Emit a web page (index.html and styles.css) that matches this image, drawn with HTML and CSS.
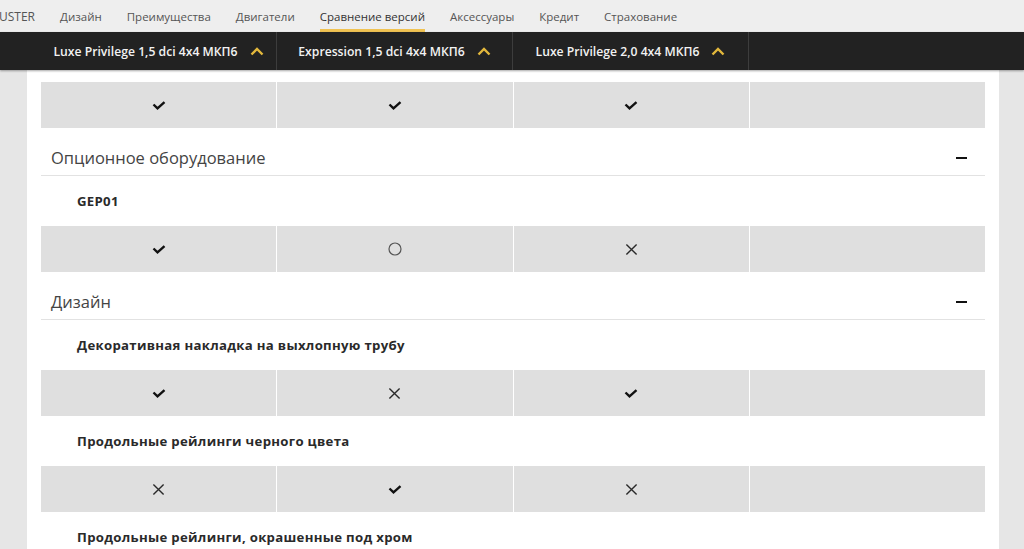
FILE: index.html
```html
<!DOCTYPE html>
<html lang="ru">
<head>
  <meta charset="UTF-8">
  <title>Сравнение версий</title>
  <link rel="stylesheet" href="styles.css">
</head>
<body>
  <!-- Верхнее меню -->
  <nav class="topnav">
    <a href="#" class="first">USTER</a>
    <a href="#">Дизайн</a>
    <a href="#">Преимущества</a>
    <a href="#">Двигатели</a>
    <a href="#" class="active">Сравнение версий</a>
    <a href="#">Аксессуары</a>
    <a href="#">Кредит</a>
    <a href="#">Страхование</a>
  </nav>

  <!-- Версии -->
  <div class="versions">
    <div class="version">Luxe Privilege 1,5 dci 4x4 МКП6 <svg class="chev" viewBox="0 0 14 9"><polyline points="1.5,7.5 7,2 12.5,7.5"/></svg></div>
    <div class="version">Expression 1,5 dci 4x4 МКП6 <svg class="chev" viewBox="0 0 14 9"><polyline points="1.5,7.5 7,2 12.5,7.5"/></svg></div>
    <div class="version">Luxe Privilege 2,0 4x4 МКП6 <svg class="chev" viewBox="0 0 14 9"><polyline points="1.5,7.5 7,2 12.5,7.5"/></svg></div>
  </div>

  <main class="content">
    <div class="cells">
      <div class="cell"><svg class="ico yes" viewBox="0 0 14 9"><polyline points="1.5,3.5 5.5,7.3 12.5,1.2"/></svg></div>
      <div class="cell"><svg class="ico yes" viewBox="0 0 14 9"><polyline points="1.5,3.5 5.5,7.3 12.5,1.2"/></svg></div>
      <div class="cell"><svg class="ico yes" viewBox="0 0 14 9"><polyline points="1.5,3.5 5.5,7.3 12.5,1.2"/></svg></div>
      <div class="cell"></div>
    </div>

    <div class="section">Опционное оборудование <span class="minus"></span></div>
    <div class="label">GEP01</div>
    <div class="cells">
      <div class="cell"><svg class="ico yes" viewBox="0 0 14 9"><polyline points="1.5,3.5 5.5,7.3 12.5,1.2"/></svg></div>
      <div class="cell"><svg class="ico opt" viewBox="0 0 14 14"><circle cx="7" cy="7" r="6"/></svg></div>
      <div class="cell"><svg class="ico no" viewBox="0 0 14 14"><path d="M1.5 1.5 L12.5 12.5 M12.5 1.5 L1.5 12.5"/></svg></div>
      <div class="cell"></div>
    </div>

    <div class="section">Дизайн <span class="minus"></span></div>
    <div class="label">Декоративная накладка на выхлопную трубу</div>
    <div class="cells">
      <div class="cell"><svg class="ico yes" viewBox="0 0 14 9"><polyline points="1.5,3.5 5.5,7.3 12.5,1.2"/></svg></div>
      <div class="cell"><svg class="ico no" viewBox="0 0 14 14"><path d="M1.5 1.5 L12.5 12.5 M12.5 1.5 L1.5 12.5"/></svg></div>
      <div class="cell"><svg class="ico yes" viewBox="0 0 14 9"><polyline points="1.5,3.5 5.5,7.3 12.5,1.2"/></svg></div>
      <div class="cell"></div>
    </div>
    <div class="label">Продольные рейлинги черного цвета</div>
    <div class="cells">
      <div class="cell"><svg class="ico no" viewBox="0 0 14 14"><path d="M1.5 1.5 L12.5 12.5 M12.5 1.5 L1.5 12.5"/></svg></div>
      <div class="cell"><svg class="ico yes" viewBox="0 0 14 9"><polyline points="1.5,3.5 5.5,7.3 12.5,1.2"/></svg></div>
      <div class="cell"><svg class="ico no" viewBox="0 0 14 14"><path d="M1.5 1.5 L12.5 12.5 M12.5 1.5 L1.5 12.5"/></svg></div>
      <div class="cell"></div>
    </div>
    <div class="label">Продольные рейлинги, окрашенные под хром</div>
  </main>
</body>
</html>
```

FILE: styles.css
```css
/* ---------- общие ---------- */
* { margin: 0; padding: 0; box-sizing: border-box; }
html, body { height: 100%; overflow: hidden; }
body { background: #e6e6e6; font-family: "Open Sans", "DejaVu Sans", sans-serif; color: #333; }

/* ---------- верхнее меню ---------- */
.topnav {
  height: 32px; background: #eeeeee;
  display: flex; align-items: stretch; gap: 25px;
  margin-left: -1px;
}
.topnav a {
  display: flex; align-items: center;
  font-size: 11.5px; color: #555; text-decoration: none;
  border-bottom: 3px solid transparent; padding-top: 3px;
}
.topnav a.first { font-size: 12px; }
.topnav a.active { color: #333; border-bottom-color: #f0c252; }

/* ---------- версии ---------- */
.versions {
  height: 38px; background: #222;
  display: flex; padding-left: 41px;
  box-shadow: 0 1px 2px rgba(0,0,0,0.35);
  position: relative;
}
.version {
  width: 236px; border-right: 1px solid #3d3d3d;
  display: flex; align-items: center; justify-content: center; gap: 12px;
  color: #f2f2f2; font-size: 12.2px; font-weight: 600;
}
.chev { width: 14px; height: 9px; fill: none; stroke: #e3b83c; stroke-width: 2.4; }

/* ---------- таблица ---------- */
.content {
  background: #fff; margin: 0 25px 0 27px;
  padding: 12px 14px 0 14px; height: 100%; overflow: hidden;
}
.cells {
  display: grid; grid-template-columns: repeat(4, 1fr); gap: 1px;
  height: 46px;
}
.cell { background: #dfdfdf; display: flex; align-items: center; justify-content: center; }
.ico { fill: none; }
.ico.yes { width: 14px; height: 9px; stroke: #111; stroke-width: 2.4; }
.ico.no { width: 13px; height: 13px; stroke: #2a2a2a; stroke-width: 1.5; }
.ico.opt { width: 14px; height: 14px; stroke: #555; stroke-width: 1.2; }

.section {
  height: 48px; padding: 18px 10px 0 10px;
  border-bottom: 1px solid #e2e2e2;
  font-size: 16.5px; line-height: 24px; color: #444;
  display: flex; justify-content: space-between;
}
.minus { width: 11px; height: 2px; background: #111; margin: 11px 8px 0 0; }

.label {
  height: 50px; padding-left: 36px;
  display: flex; align-items: center;
  font-size: 13.2px; font-weight: 700; color: #2a2a2a; letter-spacing: 0.3px;
}
```
